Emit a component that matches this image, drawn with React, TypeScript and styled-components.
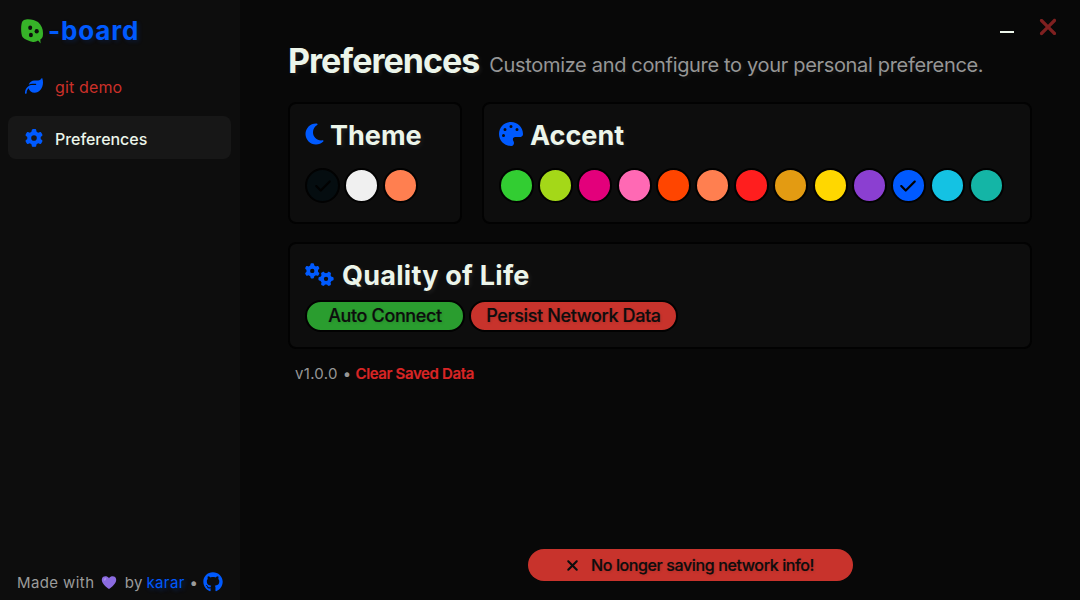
import React from "react";
import styled, { createGlobalStyle } from "styled-components";
import { FaLeaf, FaGear, FaGears, FaMoon, FaPalette, FaCheck, FaXmark, FaGithub } from "react-icons/fa6";

const accent = "#005aff";
const text = "#ecf5ea";

const Global = createGlobalStyle`
  * { box-sizing: border-box; }
  body { margin: 0; background: #080808; font-family: Inter, "Liberation Sans", sans-serif; color: ${text}; overflow: hidden; }
`;

const Window = styled.div`display: flex; width: 1080px; height: 600px;`;
const Sidebar = styled.aside`
  width: 240px; height: 600px; background: #0d0d0d; display: flex; flex-direction: column; padding: 0 9px 0 8px;
`;
const Brand = styled.div`
  display: flex; align-items: center; height: 36px; margin: 13px 0 0 12px; color: ${accent};
  font-size: 26px; font-weight: 700; letter-spacing: 0.85px; text-shadow: 2px 2px 4px rgba(0, 90, 255, 0.15);
`;
const BrandText = styled.span`margin-left: 2px; line-height: 36px;`;
const NavItem = styled.a<{ $active?: boolean; $color: string }>`
  display: flex; align-items: center; height: 43px; margin-top: 9px; padding: 2px 0 0 17px; border-radius: 8px;
  font-size: 16px; font-weight: ${(p) => (p.$active ? 500 : 400)}; color: ${(p) => p.$color};
  letter-spacing: ${(p) => (p.$active ? -0.05 : 0.15)}px;
  background: ${(p) => (p.$active ? "#171717" : "transparent")};
  svg { color: ${accent}; width: 18px; height: 18px; margin: -1px 12px 0 0; }
  &:first-of-type { margin-top: 15px; }
`;
const Credits = styled.footer`
  display: flex; align-items: center; margin: auto 0 8px 9px; height: 20px; font-size: 15px; letter-spacing: 0.4px;
  color: #9b9b9b; white-space: pre;
  svg { display: block; }
`;
const Author = styled.a`color: ${accent}; margin-left: -1px; text-shadow: 2px 2px 4px rgba(0, 90, 255, 0.3);`;
const Main = styled.main`flex: 1; display: flex; flex-direction: column; padding-left: 48px;`;
const Controls = styled.div`
  display: flex; align-items: center; justify-content: flex-end; height: 24px; margin: 15px 19px 1px 0;
`;
const Minimize = styled.i`width: 14px; height: 2px; margin: 9px 21px 0 0; background: ${text};`;
const Heading = styled.header`
  display: flex; align-items: baseline; height: 62px; white-space: nowrap;
  text-shadow: 2px 2px 4px rgba(255, 255, 255, 0.08);
`;
const Title = styled.h1`margin: 0; font-size: 34px; line-height: 42px; font-weight: 700; letter-spacing: -0.98px;`;
const Subtitle = styled.p`margin: 0 0 0 10px; font-size: 20px; line-height: 24px; letter-spacing: -0.33px; color: #969696; position: relative; top: -1px;`;
const Cards = styled.div`display: grid; grid-template-columns: 174px 550px; gap: 18px 20px;`;
const Card = styled.section<{ $wide?: boolean; $height: number }>`
  grid-column: ${(p) => (p.$wide ? "1 / -1" : "auto")}; height: ${(p) => p.$height}px;
  background: #0d0d0d; border: 2px solid #020202; border-radius: 8px; padding: 13px 15px;
`;
const CardTitle = styled.h2<{ $gap: number; $spacing?: number }>`
  display: flex; align-items: center; gap: ${(p) => p.$gap}px; margin: 0; height: 34px; padding-top: 2px;
  font-size: 27px; font-weight: 700; letter-spacing: ${(p) => p.$spacing ?? 0}px;
  text-shadow: 2px 2px 4px rgba(255, 255, 255, 0.08);
  svg { color: ${accent}; margin-top: -2px; }
`;
const MoonIcon = styled(FaMoon)`width: 21px; height: 24px; margin-left: -1px; margin-right: -2px;`;
const Swatches = styled.div`display: flex; gap: 4.2px; margin-top: 17px;`;
const Swatch = styled.button<{ $color: string }>`
  width: 35px; height: 35px; flex: none; padding: 0; border-radius: 50%; border: 2px solid #020202;
  background: ${(p) => p.$color}; color: #020202; display: grid; place-items: center;
`;
const Toggles = styled.div`display: flex; gap: 4px; margin-top: 9px;`;
const Toggle = styled.button<{ $on?: boolean; $width: number }>`
  width: ${(p) => p.$width}px; height: 32px; padding: 0 0 1px; border: 2px solid #020202; border-radius: 16px;
  background: ${(p) => (p.$on ? "#2a9d2f" : "#c8332c")}; color: #0d0d0d; font: 500 18px Inter, sans-serif;
  letter-spacing: -0.36px; -webkit-text-stroke: 0.2px #0d0d0d;
  text-shadow: 1px 1px 3px rgba(0, 0, 0, 0.12); white-space: nowrap;
`;
const Meta = styled.div`display: flex; gap: 5px; margin: 15px 0 0 7px; font-size: 15px; line-height: 20px; letter-spacing: 0.3px; color: #969696;`;
const Clear = styled.a`margin-left: -1px; color: #d82525; font-weight: 600; letter-spacing: -0.38px; -webkit-text-stroke: 0.2px #d82525;`;
const Toast = styled.div`
  display: flex; align-items: center; gap: 10px; width: 325px; height: 32px; margin: auto 0 19px 240px; padding-left: 36px;
  border-radius: 16px; background: #c8332c; color: #0d0d0d; font-size: 16px; font-weight: 500; white-space: nowrap;
  letter-spacing: -0.38px; -webkit-text-stroke: 0.2px #0d0d0d; text-shadow: 1px 1px 3px rgba(0, 0, 0, 0.12);
`;

const themes = ["#050d10", "#f0f0f0", "#ff7f50"];
const accents = ["#32cd32", "#a4d818", "#e3007b", "#ff69b4", "#ff4500", "#ff7f50", "#ff1e1e", "#e39b12", "#ffd700", "#8b3fd1", "#005aff", "#14c2e3", "#14b5a6"];

const Logo = () => (
  <svg width="26" height="28" viewBox="0 0 26 28">
    <path fill="#36b328" d="M6 2.400C10 1.800 15 3 18 5C21.500 8 23 12 23 16C23 20 22.500 21 20.300 22.600L20.600 26.600L18.800 24.200L18 23.500C16.500 24 15.500 25.300 13 25C9 24.300 4.500 22.300 2.500 20C.8 17 .6 7 2.500 4.300C3.200 3.200 4.500 2.600 6 2.400Z" />
    <ellipse cx="10.200" cy="10.800" rx="2" ry="2.300" fill="#0d0d0d" />
    <ellipse cx="16.700" cy="14.300" rx="2.100" ry="2.200" fill="#0d0d0d" />
    <ellipse cx="10.900" cy="18" rx="2" ry="2.300" fill="#0d0d0d" />
  </svg>
);
const HeartSvg = styled.svg`margin: 0 3px 0 2px;`;
const Heart = () => (
  <HeartSvg width="16" height="15" viewBox="0 0 16 15">
    <path fill="#8b6be0" d="M8 14C5 12 .8 8.500 .8 4.800C.8 .8 6 .2 8 3.300C10 .2 15.200 .8 15.200 4.800C15.200 8.500 11 12 8 14Z" />
    <ellipse cx="4" cy="4.200" rx="1" ry="1.700" fill="#a78bf0" transform="rotate(35 4 4.200)" />
  </HeartSvg>
);

export default function App() {
  return (
    <Window>
      <Global />
      <Sidebar>
        <Brand><Logo /><BrandText>-board</BrandText></Brand>
        <NavItem $color="#cb3029"><FaLeaf />git demo</NavItem>
        <NavItem $active $color={text}><FaGear />Preferences</NavItem>
        <Credits>Made with <Heart /> by <Author>karar</Author> • <FaGithub size={20} color={accent} /></Credits>
      </Sidebar>
      <Main>
        <Controls><Minimize /><FaXmark size={26} color="#7f2020" /></Controls>
        <Heading><Title>Preferences</Title><Subtitle>Customize and configure to your personal preference.</Subtitle></Heading>
        <Cards>
          <Card $height={122}>
            <CardTitle $gap={7}><MoonIcon />Theme</CardTitle>
            <Swatches>{themes.map((c, i) => <Swatch key={c} $color={c}>{i === 0 && <FaCheck size={18} />}</Swatch>)}</Swatches>
          </Card>
          <Card $height={122}>
            <CardTitle $gap={7}><FaPalette size={24} />Accent</CardTitle>
            <Swatches>{accents.map((c, i) => <Swatch key={i} $color={c}>{i === 10 && <FaCheck size={18} />}</Swatch>)}</Swatches>
          </Card>
          <Card $wide $height={107}>
            <CardTitle $gap={8} $spacing={0.26}><FaGears size={29} />Quality of Life</CardTitle>
            <Toggles><Toggle $on $width={160}>Auto Connect</Toggle><Toggle $width={209}>Persist Network Data</Toggle></Toggles>
          </Card>
        </Cards>
        <Meta><span>v1.0.0</span><span>•</span><Clear>Clear Saved Data</Clear></Meta>
        <Toast><FaXmark size={17} />No longer saving network info!</Toast>
      </Main>
    </Window>
  );
}
